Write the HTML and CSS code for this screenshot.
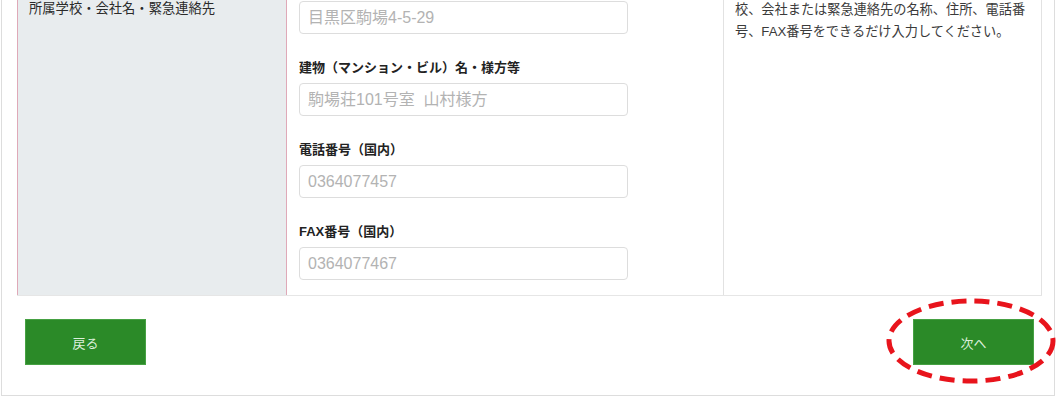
FILE: index.html
```html
<!DOCTYPE html>
<html>

<head>
    <meta charset="utf-8">
    <link rel="stylesheet" href="styles.css">
</head>

<body>
    <div class="frame">
        <div class="table">
            <div class="head">
                緊急連絡先等<br>
                所属学校・会社名・緊急連絡先
            </div>
            <div class="fields">
                <div class="field">
                    <label class="label">番地</label>
                    <input class="box" type="text" placeholder="目黒区駒場4-5-29">
                </div>
                <div class="field">
                    <label class="label">建物（マンション・ビル）名・様方等</label>
                    <input class="box" type="text" placeholder="駒場荘101号室&nbsp; 山村様方">
                </div>
                <div class="field">
                    <label class="label">電話番号（国内）</label>
                    <input class="box" type="text" placeholder="0364077457">
                </div>
                <div class="field">
                    <label class="label">FAX番号（国内）</label>
                    <input class="box" type="text" placeholder="0364077467">
                </div>
            </div>
            <div class="note">
                勤務先がない場合は、在籍している学<br>
                校、会社または緊急連絡先の名称、住所、電話番<br>
                号、FAX番号をできるだけ入力してください。
            </div>
        </div>

        <div class="footer">
            <button class="button" type="button">戻る</button>
            <span class="mark">
                <button class="button" type="button">次へ</button>
                <!-- red dashed circle drawn over the next button -->
                <svg class="ring" width="180" height="94" viewBox="0 0 180 94">
                    <ellipse cx="90" cy="47" rx="82" ry="40" fill="none" stroke="#e8141c" stroke-width="5" stroke-dasharray="15 8"/>
                </svg>
            </span>
        </div>
    </div>
</body>
</html>
```

FILE: styles.css
```css
body,
html {
    margin: 0;
    background: #ffffff;
}

body {
    font-family: "Liberation Sans", "Noto Sans CJK JP", sans-serif;
    color: #333333;
}

.frame {
    margin: -38px 0 0 1px;
    width: 1025px;
    padding: 0 12px 0 15px;
    border: 1px solid #dddddd;
}

.table {
    display: grid;
    grid-template-columns: 270px 436px 319px;
    border-bottom: 1px solid #e6e6e6;
}

.head {
    background: #e8ecee;
    border-left: 1px solid #dfa9b8;
    border-right: 1px solid #dfa9b8;
    padding: 16px 11px 14px 11px;
    font-size: 13.3px;
    line-height: 20px;
    color: #2a2a2a;
}

.fields {
    padding: 14px 12px 15px 12px;
}

.field {
    display: flex;
    flex-direction: column;
    align-items: flex-start;
    margin-top: 25px;
}

.field:first-child {
    margin-top: 0;
}

.label {
    font-size: 13px;
    font-weight: bold;
    line-height: 18px;
    margin-bottom: 6px;
    color: #222222;
}

.box {
    box-sizing: border-box;
    width: 329px;
    height: 33px;
    padding: 0 8px;
    border: 1px solid #dddddd;
    border-radius: 4px;
    font-family: "Liberation Sans", "Noto Sans CJK JP", sans-serif;
    font-size: 16px;
    outline: none;
}

.box::placeholder {
    color: #b3b3b3;
}

.note {
    border-left: 1px solid #e2e2e2;
    border-right: 1px solid #e2e2e2;
    padding: 14px 11px;
    font-size: 13.2px;
    line-height: 22px;
    color: #3a3a3a;
    white-space: nowrap;
}

.footer {
    display: flex;
    justify-content: space-between;
    align-items: center;
    padding: 23px 8px 30px 8px;
}

.button {
    width: 121px;
    height: 46px;
    background: #2b8a28;
    border: 1px solid #46a143;
    color: #dcefdc;
    font-family: "Liberation Sans", "Noto Sans CJK JP", sans-serif;
    font-size: 13px;
    cursor: pointer;
}

.mark {
    position: relative;
    display: block;
}

.mark .button {
    display: block;
}

.ring {
    position: absolute;
    left: -32px;
    top: -25px;
    overflow: visible;
}
```
